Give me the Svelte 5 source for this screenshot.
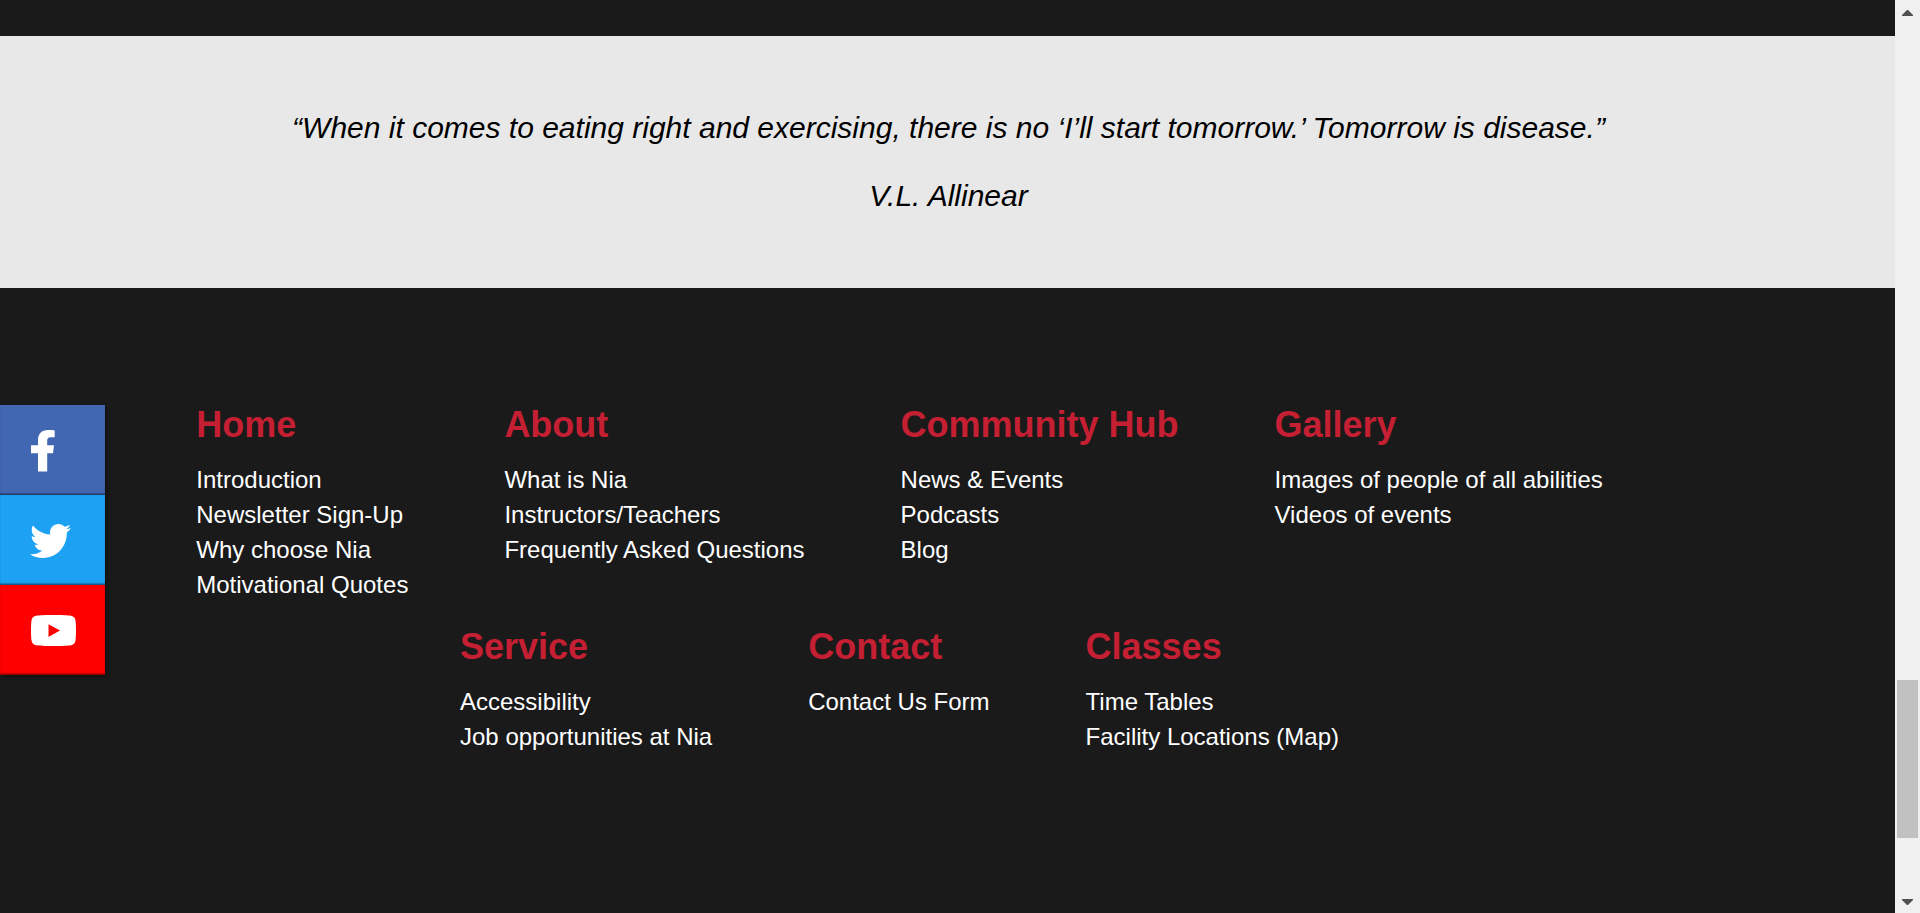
<script>
  const rows = [
    [
      { title: 'Home', links: ['Introduction', 'Newsletter Sign-Up', 'Why choose Nia', 'Motivational Quotes'] },
      { title: 'About', links: ['What is Nia', 'Instructors/Teachers', 'Frequently Asked Questions'] },
      { title: 'Community Hub', links: ['News & Events', 'Podcasts', 'Blog'] },
      { title: 'Gallery', links: ['Images of people of all abilities', 'Videos of events'] }
    ],
    [
      { title: 'Service', links: ['Accessibility', 'Job opportunities at Nia'] },
      { title: 'Contact', links: ['Contact Us Form'] },
      { title: 'Classes', links: ['Time Tables', 'Facility Locations (Map)'] }
    ]
  ];
</script>

<div class="window">
  <div class="page">
    <section class="quote">
      <p>“When it comes to eating right and exercising, there is no ‘I’ll start tomorrow.’ Tomorrow is disease.”</p>
      <p>V.L. Allinear</p>
    </section>
    <footer>
      {#each rows as row}
        <div class="row">
          {#each row as col}
            <div class="col">
              <h2>{col.title}</h2>
              <ul>
                {#each col.links as link}<li>{link}</li>{/each}
              </ul>
            </div>
          {/each}
        </div>
      {/each}
    </footer>
    <nav class="social" aria-label="Social">
      <span class="fb">
        <svg width="24" height="42" viewBox="0 0 24 42"><path d="M7 41.500V23.300H0V15.300H7V10.500C7 3.800 10.500 0 17 0C20 0 22.500.2 23.700.4V7.200H19.800C16.900 7.200 16.200 8.600 16.200 10.900V15.300H23L22 23.300H16.200V41.500Z" /></svg>
      </span>
      <span class="tw">
        <svg width="41" height="34" viewBox="0 48 512 416" preserveAspectRatio="none"><path d="M459.37 151.716c.325 4.548.325 9.097.325 13.645 0 138.72-105.583 298.558-298.558 298.558-59.452 0-114.68-17.219-161.137-47.106 8.447.974 16.568 1.299 25.34 1.299 49.055 0 94.213-16.568 130.274-44.832-46.132-.975-84.792-31.188-98.112-72.772 6.498.974 12.995 1.624 19.818 1.624 9.421 0 18.843-1.3 27.614-3.573-48.081-9.747-84.143-51.98-84.143-102.985v-1.299c13.969 7.797 30.214 12.67 47.431 13.319-28.264-18.843-46.781-51.005-46.781-87.391 0-19.492 5.197-37.36 14.294-52.954 51.655 63.675 129.3 105.258 216.365 109.807-1.624-7.797-2.599-15.918-2.599-24.04 0-57.828 46.782-104.934 104.934-104.934 30.213 0 57.502 12.67 76.67 33.137 23.715-4.548 46.456-13.32 66.599-25.34-7.798 24.366-24.366 44.833-46.132 57.827 21.117-2.273 41.584-8.122 60.426-16.243-14.292 20.791-32.161 39.308-52.628 54.253z" /></svg>
      </span>
      <span class="yt">
        <svg width="45" height="31" viewBox="0 0 45 31"><path fill-rule="evenodd" d="M22.500 0C31 0 37 .3 40 .8C43 1.300 44.200 3.200 44.600 6.200C45.150 11 45.150 20 44.600 24.800C44.200 27.800 43 29.700 40 30.200C37 30.700 31 31 22.500 31S8 30.700 5 30.200C2 29.700.8 27.800.4 24.800C-.15 20-.15 11 .4 6.200C.8 3.200 2 1.300 5 .8C8 .3 14 0 22.500 0ZM17.500 9.300V22L29 15.600Z" /></svg>
      </span>
    </nav>
  </div>
  <div class="scrollbar">
    <svg width="11" height="6" viewBox="0 0 11 6"><path d="M5 0h1L11 5v1H0V5Z" /></svg>
    <div class="thumb"></div>
    <svg width="11" height="6" viewBox="0 0 11 6"><path d="M5 6h1L11 1V0H0v1Z" /></svg>
  </div>
</div>

<style>
  :global(body) { margin: 0; overflow: hidden; }
  .window {
    display: flex;
    height: 913px;
    font-family: "Liberation Sans", Arial, sans-serif;
    background: #1a1a1a;
  }
  .page {
    position: relative;
    flex: 1;
    display: flex;
    flex-direction: column;
    padding-top: 36px;
  }
  .quote {
    box-sizing: border-box;
    height: 252px;
    padding-top: 75px;
    padding-left: 2px;
    background: #e8e8e8;
    color: #000;
    text-align: center;
    font-size: 30px;
    font-style: italic;
    line-height: 34px;
  }
  .quote p { margin: 0 0 34px; }
  footer { padding-top: 116px; padding-right: 96px; }
  .row { display: flex; justify-content: center; gap: 96px; height: 222px; }
  h2 { margin: 0 0 16px; font-size: 36px; line-height: 42px; color: #c41f32; }
  ul { margin: 0; padding: 0; list-style: none; color: #fff; }
  li { font-size: 24px; line-height: 35px; white-space: nowrap; }
  .social {
    position: absolute;
    left: 0;
    top: 405px;
    width: 105px;
    box-shadow: 2px 2px 5px rgba(0, 0, 0, 0.4);
  }
  .social span {
    box-sizing: border-box;
    display: flex;
    align-items: center;
    height: 90px;
    padding: 2px 0 0 31px;
    box-shadow: inset 0 -1.5px 1px rgba(0, 0, 0, 0.45);
  }
  .social svg { fill: #fff; }
  .fb { background: #4267b2; }
  .social .tw { background: #1da1f2; padding: 2px 0 0 30px; }
  .social .yt { background: #f00; padding-top: 1px; }
  .scrollbar {
    box-sizing: border-box;
    width: 25px;
    padding: 10px 2px 8px;
    display: flex;
    flex-direction: column;
    align-items: center;
    background: #f0f0f0;
  }
  .scrollbar svg { fill: #505050; }
  .thumb { width: 21px; height: 158px; margin-top: 664px; margin-bottom: auto; background: #c1c1c1; }
</style>
